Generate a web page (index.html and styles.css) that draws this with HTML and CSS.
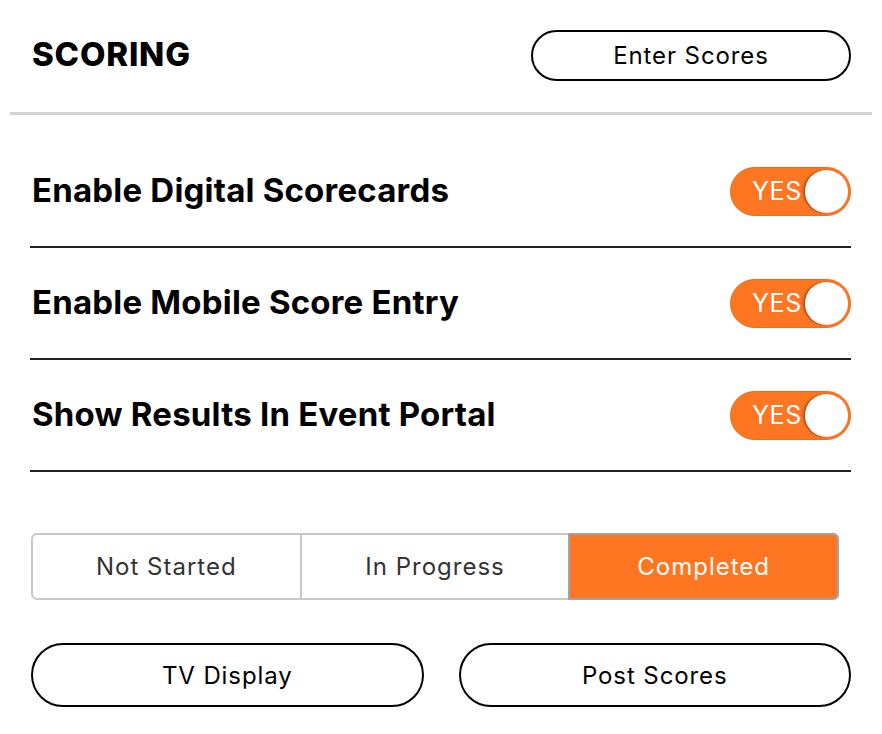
FILE: index.html
```html
<!DOCTYPE html>
<html>
<head>
<meta charset="utf-8">
<link rel="stylesheet" href="styles.css">
</head>
<body>
<div class="panel">
  <div class="header">
    <h1 class="title">SCORING</h1>
    <button class="pill-btn header-btn">Enter Scores</button>
  </div>
  <div class="settings">
    <div class="row">
      <span class="row-label">Enable Digital Scorecards</span>
      <div class="toggle"><span class="toggle-text">YES</span><span class="knob"></span></div>
    </div>
    <div class="row">
      <span class="row-label">Enable Mobile Score Entry</span>
      <div class="toggle"><span class="toggle-text">YES</span><span class="knob"></span></div>
    </div>
    <div class="row">
      <span class="row-label">Show Results In Event Portal</span>
      <div class="toggle"><span class="toggle-text">YES</span><span class="knob"></span></div>
    </div>
  </div>
  <div class="segmented">
    <div class="seg">Not Started</div>
    <div class="seg">In Progress</div>
    <div class="seg active">Completed</div>
  </div>
  <div class="actions">
    <button class="pill-btn action-btn">TV Display</button>
    <button class="pill-btn action-btn">Post Scores</button>
  </div>
</div>
</body>
</html>
```

FILE: styles.css
```css
* { box-sizing: border-box; }
body {
  margin: 0;
  background: #fff;
  font-family: "Inter", "Lato", sans-serif;
  color: #000;
}
.panel {
  margin: 0 10px;
  width: 862px;
}
.header {
  display: flex;
  justify-content: space-between;
  align-items: center;
  padding: 30px 21px 31px 20px;
  border-bottom: 3px solid #d3d3d3;
}
.title {
  margin: 0;
  font-size: 33px;
  font-weight: 800;
  line-height: 1;
  letter-spacing: 0.8px;
  margin-top: -3px;
  padding-left: 2px;
}
.pill-btn {
  font-family: inherit;
  background: #fff;
  color: #000;
  border: 2px solid #000;
  border-radius: 999px;
  font-size: 24px;
  letter-spacing: 0.9px;
  cursor: pointer;
}
.header-btn {
  width: 320px;
  height: 51px;
}
.settings {
  padding: 21px 21px 0 20px;
}
.row {
  display: flex;
  justify-content: space-between;
  align-items: center;
  height: 112px;
  border-bottom: 2px solid #222;
}
.row-label {
  font-size: 33px;
  font-weight: 700;
  letter-spacing: 0.2px;
  padding-left: 2px;
  margin-top: -2px;
}
.toggle {
  position: relative;
  width: 121px;
  height: 49px;
  border-radius: 25px;
  background: #fe7522;
  border: 1px solid #f06a18;
  display: flex;
  align-items: center;
  padding-left: 21px;
}
.toggle-text {
  color: #fff;
  font-size: 25px;
  letter-spacing: 0.6px;
}
.knob {
  position: absolute;
  right: 2px;
  top: 2px;
  width: 43px;
  height: 43px;
  border-radius: 50%;
  background: #fff;
  box-shadow: -2px 0 2px rgba(0, 0, 0, 0.3);
}
.segmented {
  display: flex;
  margin: 61px 33px 0 21px;
  height: 67px;
  border: 2px solid #c8c8c8;
  border-radius: 6px;
}
.seg {
  flex: 1;
  display: flex;
  align-items: center;
  justify-content: center;
  font-size: 24px;
  letter-spacing: 1px;
  color: #333;
}
.seg:first-child {
  border-radius: 4px 0 0 4px;
}
.seg + .seg {
  border-left: 2px solid #c8c8c8;
}
.seg.active {
  background: #fe7522;
  color: #fff;
  border: 2px solid #a3a3a3;
  margin: -2px -2px -2px 0;
  border-radius: 0 6px 6px 0;
}
.actions {
  display: flex;
  gap: 35px;
  margin: 43px 21px 0 21px;
}
.action-btn {
  flex: 1;
  height: 64px;
}
```
